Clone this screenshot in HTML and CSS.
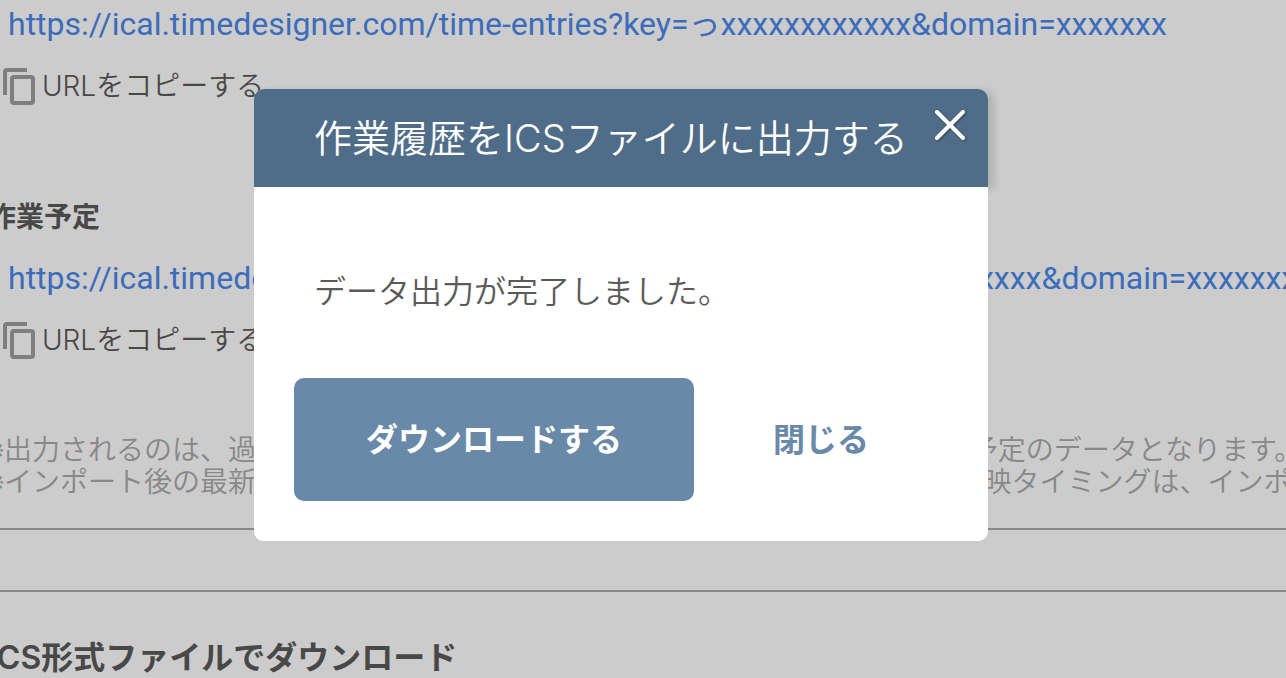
FILE: index.html
```html
<!DOCTYPE html>
<html lang="ja">
<head>
  <meta charset="UTF-8">
  <meta name="viewport" content="width=device-width, initial-scale=1.0">
  <title>作業履歴をICSファイルに出力する</title>
  <link rel="stylesheet" href="styles.css">
</head>
<body>
  <main class="page">
    <!-- 作業履歴 -->
    <section class="feed">
      <a class="feed-url" href="#">https://ical.timedesigner.com/time-entries?key=っxxxxxxxxxxxx&amp;domain=xxxxxxx</a>
      <button class="copy-button" type="button">
        <svg class="copy-icon" viewBox="0 0 32 37" aria-hidden="true">
          <path d="M2 27V4a2 2 0 0 1 2-2h20"/>
          <rect x="9" y="9" width="21" height="26" rx="2"/>
        </svg>
        URLをコピーする
      </button>
    </section>

    <!-- 作業予定 -->
    <section class="feed">
      <h3 class="feed-title">作業予定</h3>
      <a class="feed-url" href="#">https://ical.timedesigner.com/scheduled-entries?key=xxxxxxxxxxxxxxxxx&amp;domain=xxxxxxx</a>
      <button class="copy-button" type="button">
        <svg class="copy-icon" viewBox="0 0 32 37" aria-hidden="true">
          <path d="M2 27V4a2 2 0 0 1 2-2h20"/>
          <rect x="9" y="9" width="21" height="26" rx="2"/>
        </svg>
        URLをコピーする
      </button>
    </section>

    <p class="notes">
      ※出力されるのは、過去3 ヶ月から未来3ヶ月までに登録された作業履歴と作業予定のデータとなります。<br>
      ※インポート後の最新のデータは自動的に反映されますが、各カレンダーへの反映タイミングは、インポート先の
    </p>
    <hr class="line">
    <hr class="line">
    <h2 class="section-title">ICS形式ファイルでダウンロード</h2>
  </main>

  <!-- モーダル -->
  <div class="overlay">
    <div class="modal" role="dialog" aria-labelledby="modal-title">
      <div class="modal-header">
        <h1 class="modal-title" id="modal-title">作業履歴をICSファイルに出力する</h1>
        <button class="modal-x" type="button" aria-label="閉じる">
          <svg viewBox="0 0 30 30" aria-hidden="true">
            <path d="M2 2l26 26M28 2L2 28"/>
          </svg>
        </button>
      </div>
      <div class="modal-body">
        <p class="modal-text">データ出力が完了しました。</p>
        <div class="modal-actions">
          <button class="download-button" type="button">ダウンロードする</button>
          <button class="close-button" type="button">閉じる</button>
        </div>
      </div>
    </div>
  </div>
</body>
</html>
```

FILE: styles.css
```css
* {
  box-sizing: border-box;
}
body {
  margin: 0;
  background-color: #fff;
  color: #5a5a58;
  font-family: Inter, "Noto Sans CJK JP", sans-serif;
  font-size: 32px;
  overflow: hidden;
}
button {
  border: none;
  padding: 0;
  background: none;
  color: inherit;
  font: inherit;
  cursor: pointer;
}
.page {
  margin-left: -12px;
  overflow: hidden;
  white-space: nowrap;
}
.feed {
  display: flex;
  flex-direction: column;
  align-items: flex-start;
}
.feed-title {
  margin: 91px 0 17px;
  font-size: 28px;
  font-weight: 600;
  line-height: 40px;
}
.feed-url {
  padding-left: 20px;
  color: #4c88ec;
  font-family: Roboto, "Noto Sans CJK JP", sans-serif;
  line-height: 48px;
  text-decoration: none;
}
.copy-button {
  display: flex;
  align-items: center;
  gap: 7px;
  margin-top: 18px;
  padding-left: 15px;
  font-size: 28px;
  font-weight: 350;
  line-height: 40px;
}
.copy-icon {
  width: 32px;
  height: 37px;
  fill: none;
  stroke: #9f9f9f;
  stroke-width: 4;
}
.notes {
  margin: 74px 0 30px;
  color: #aaa;
  font-size: 28px;
  font-weight: 350;
  line-height: 32px;
}
.line {
  margin: 0 0 60px;
  border: none;
  border-top: 2px solid #aaa;
}
.section-title {
  margin: -18px 0 0;
  font-size: 32px;
  font-weight: 600;
  line-height: 48px;
}
.overlay {
  position: fixed;
  inset: 0;
  display: flex;
  align-items: flex-start;
  padding: 89px 298px 0 254px;
  background-color: rgba(0, 0, 0, 0.2);
}
.modal {
  flex: 1;
  border-radius: 10px;
  background-color: #fff;
}
.modal-header {
  display: flex;
  justify-content: space-between;
  align-items: flex-start;
  padding: 21px 23px 21px 60px;
  border-radius: 10px 10px 0 0;
  background-color: #4f6d88;
  box-shadow: 6px 2px 10px rgba(0, 0, 0, 0.15);
  color: #fff;
}
.modal-title {
  margin: 0;
  font-size: 38px;
  font-weight: 350;
  line-height: 56px;
  white-space: nowrap;
}
.modal-x svg {
  display: block;
  width: 30px;
  height: 30px;
  fill: none;
  stroke: #fff;
  stroke-width: 4;
  stroke-linecap: round;
  filter: drop-shadow(1px 1px 1px rgba(0, 0, 0, 0.4));
}
.modal-body {
  position: relative;
  padding: 81px 40px 40px;
  background-color: #fff;
  border-radius: 0 0 10px 10px;
}
.modal-text {
  margin: 0 20px 62px;
  font-weight: 350;
  line-height: 48px;
}
.modal-actions {
  display: flex;
  gap: 79px;
}
.download-button {
  width: 400px;
  padding: 38px 0 37px;
  border-radius: 10px;
  background-color: #6989a8;
  color: #fff;
  font-weight: bold;
  line-height: 48px;
}
.close-button {
  color: #6989a8;
  font-weight: bold;
  line-height: 48px;
}
```
